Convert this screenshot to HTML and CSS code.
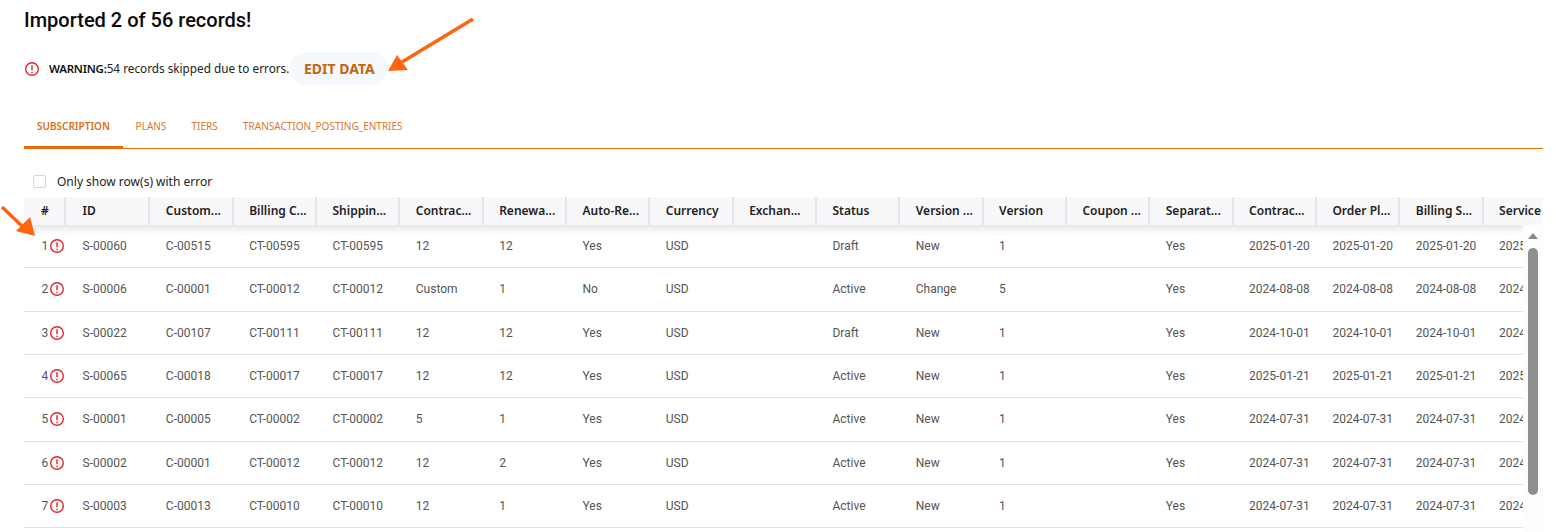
FILE: index.html
```html
<!DOCTYPE html>
<html lang="en">
<head>
<meta charset="utf-8">
<title>Import result</title>
<link rel="stylesheet" href="styles.css">
</head>
<body>
<main class="page">
  <h1 class="title">Imported 2 of 56 records!</h1>
  <div class="warning">
    <svg class="err err-warn" viewBox="1 1 14 14"><circle cx="8" cy="8" r="6.3"/><path d="M8 4.2v5M8 10.7v1.5"/></svg>
    <span class="warn-text"><b>WARNING:</b>54 records skipped due to errors.</span>
    <button class="edit">EDIT DATA</button>
  </div>
  <nav class="tabs">
    <a class="tab active">SUBSCRIPTION</a>
    <a class="tab">PLANS</a>
    <a class="tab">TIERS</a>
    <a class="tab">TRANSACTION_POSTING_ENTRIES</a>
  </nav>
  <label class="filter"><span class="box"></span>Only show row(s) with error</label>
  <div class="grid-wrap">
    <table class="grid">
      <colgroup><col class="c-num"><col span="18" class="c-std"></colgroup>
      <thead>
        <tr>
          <th class="num">#</th><th>ID</th><th>Custom...</th><th>Billing C...</th><th>Shippin...</th><th>Contrac...</th><th>Renewa...</th><th>Auto-Re...</th><th>Currency</th><th>Exchan...</th><th>Status</th><th>Version ...</th><th>Version</th><th>Coupon ...</th><th>Separat...</th><th>Contrac...</th><th>Order Pl...</th><th>Billing S...</th><th>Service ...</th>
        </tr>
      </thead>
      <tbody>
        <tr><td class="num">1<svg class="err" viewBox="1 1 14 14"><circle cx="8" cy="8" r="6.3"/><path d="M8 4.2v5M8 10.7v1.5"/></svg></td><td>S-00060</td><td>C-00515</td><td>CT-00595</td><td>CT-00595</td><td>12</td><td>12</td><td>Yes</td><td>USD</td><td></td><td>Draft</td><td>New</td><td>1</td><td></td><td>Yes</td><td>2025-01-20</td><td>2025-01-20</td><td>2025-01-20</td><td>2025-01-20</td></tr>
        <tr><td class="num">2<svg class="err" viewBox="1 1 14 14"><circle cx="8" cy="8" r="6.3"/><path d="M8 4.2v5M8 10.7v1.5"/></svg></td><td>S-00006</td><td>C-00001</td><td>CT-00012</td><td>CT-00012</td><td>Custom</td><td>1</td><td>No</td><td>USD</td><td></td><td>Active</td><td>Change</td><td>5</td><td></td><td>Yes</td><td>2024-08-08</td><td>2024-08-08</td><td>2024-08-08</td><td>2024-08-08</td></tr>
        <tr><td class="num">3<svg class="err" viewBox="1 1 14 14"><circle cx="8" cy="8" r="6.3"/><path d="M8 4.2v5M8 10.7v1.5"/></svg></td><td>S-00022</td><td>C-00107</td><td>CT-00111</td><td>CT-00111</td><td>12</td><td>12</td><td>Yes</td><td>USD</td><td></td><td>Draft</td><td>New</td><td>1</td><td></td><td>Yes</td><td>2024-10-01</td><td>2024-10-01</td><td>2024-10-01</td><td>2024-10-01</td></tr>
        <tr><td class="num">4<svg class="err" viewBox="1 1 14 14"><circle cx="8" cy="8" r="6.3"/><path d="M8 4.2v5M8 10.7v1.5"/></svg></td><td>S-00065</td><td>C-00018</td><td>CT-00017</td><td>CT-00017</td><td>12</td><td>12</td><td>Yes</td><td>USD</td><td></td><td>Active</td><td>New</td><td>1</td><td></td><td>Yes</td><td>2025-01-21</td><td>2025-01-21</td><td>2025-01-21</td><td>2025-01-21</td></tr>
        <tr><td class="num">5<svg class="err" viewBox="1 1 14 14"><circle cx="8" cy="8" r="6.3"/><path d="M8 4.2v5M8 10.7v1.5"/></svg></td><td>S-00001</td><td>C-00005</td><td>CT-00002</td><td>CT-00002</td><td>5</td><td>1</td><td>Yes</td><td>USD</td><td></td><td>Active</td><td>New</td><td>1</td><td></td><td>Yes</td><td>2024-07-31</td><td>2024-07-31</td><td>2024-07-31</td><td>2024-07-31</td></tr>
        <tr><td class="num">6<svg class="err" viewBox="1 1 14 14"><circle cx="8" cy="8" r="6.3"/><path d="M8 4.2v5M8 10.7v1.5"/></svg></td><td>S-00002</td><td>C-00001</td><td>CT-00012</td><td>CT-00012</td><td>12</td><td>2</td><td>Yes</td><td>USD</td><td></td><td>Active</td><td>New</td><td>1</td><td></td><td>Yes</td><td>2024-07-31</td><td>2024-07-31</td><td>2024-07-31</td><td>2024-07-31</td></tr>
        <tr><td class="num">7<svg class="err" viewBox="1 1 14 14"><circle cx="8" cy="8" r="6.3"/><path d="M8 4.2v5M8 10.7v1.5"/></svg></td><td>S-00003</td><td>C-00013</td><td>CT-00010</td><td>CT-00010</td><td>12</td><td>1</td><td>Yes</td><td>USD</td><td></td><td>Active</td><td>New</td><td>1</td><td></td><td>Yes</td><td>2024-07-31</td><td>2024-07-31</td><td>2024-07-31</td><td>2024-07-31</td></tr>
      </tbody>
    </table>
    <div class="scrollbar"><span class="sb-arrow"></span><span class="sb-thumb"></span></div>
  </div>
</main>
<svg class="arrow arrow-top" viewBox="0 0 100 70"><path d="M93 9 L22 52" class="arrow-line"/><path d="M8 61 L28 60 L17 45 Z" class="arrow-head"/></svg>
<svg class="arrow arrow-side" viewBox="0 0 40 40"><path d="M2 7 L23 27" class="arrow-line"/><path d="M35 36 L16 31 L30 17 Z" class="arrow-head"/></svg>
</body>
</html>
```
FILE: styles.css
```css
* { box-sizing: border-box; }
html, body { margin: 0; height: 532px; overflow: hidden; background: #fff; }
body { position: relative; font-family: "Noto Sans", sans-serif; color: #1f1f1f; }
.page { padding: 8px 11px 0 24px; }
.title { margin: 0; font: 500 20px/24px Roboto, sans-serif; color: #0b0b0b; }
.warning { display: flex; align-items: center; margin-top: 19px; height: 34px; font-size: 11.75px; }
.err { width: 14px; height: 14px; fill: none; stroke: #e3262a; stroke-width: 1.4; flex: none; }
.err-warn { margin: 2px 10px 0 1px; }
.warn-text b { font-size: 11.5px; font-weight: 600; letter-spacing: -.25px; color: #111; }
.warn-text { color: #222; }
.edit { height: 33px; width: 98px; margin-left: 1px; border: 0; border-radius: 17px; background: #f5f8fc; color: #c4650f; font: 700 14px/33px "Noto Sans", sans-serif; padding: 0; }
.tabs { display: flex; margin-top: 22px; height: 42px; border-bottom: 1px solid #ec6c06; }
.tab { padding: 0 12.6px; font: 400 10px/39px "Noto Sans", sans-serif; color: #d9782d; white-space: nowrap; }
.tab.active { width: 99px; flex: none; padding: 0 13px; font-weight: 600; color: #e06d12; border-bottom: 3px solid #e56b0a; height: 42px; }
.filter { display: flex; align-items: center; height: 20px; margin-top: 22px; font-size: 12px; color: #222; }
.box { width: 13px; height: 13px; margin: 0 11px 0 9px; border: 1px solid #d5d5d8; border-radius: 2px; background: #fff; }
.grid-wrap { position: relative; margin-top: 6px; height: 340px; overflow: hidden; }
.grid { table-layout: fixed; width: 1542.94px; border-collapse: separate; border-spacing: 0; font-family: Roboto, sans-serif; font-size: 12px; }
.c-num { width: 43px; }
.c-std { width: 83.33px; }
th { height: 28px; padding: 0 0 1px 15.5px; background: #f8f8fb; border-right: 2px solid #e5e5ec; font: 600 12px/27px "Noto Sans", sans-serif; text-align: left; color: #222; overflow: hidden; white-space: nowrap; }
thead tr { box-shadow: 0 4px 8px rgba(0,0,0,.11); }
th.num { padding-left: 17px; border-right: 0; box-shadow: inset -1px 0 0 #f8f8fb, inset -3px 0 0 #e5e5ec; }
td { height: 43.33px; padding: 0 0 0 15.5px; border-bottom: 1px solid #e2e2e4; color: #555; white-space: nowrap; overflow: hidden; }
td.num { padding: 0 0 0 17.5px; }
td.num .err { vertical-align: -3px; margin-left: 1.5px; }
.scrollbar { position: absolute; right: 0; top: 28px; bottom: 0; width: 20px; background: #fdfdfd; }
.sb-arrow { position: absolute; left: 5px; top: 8px; border: 5px solid transparent; border-top: 0; border-bottom: 6px solid #8a8a8a; }
.sb-thumb { position: absolute; left: 5px; top: 23px; width: 10px; height: 247px; background: #8f8f8f; border-radius: 6px; }
.arrow { position: absolute; overflow: visible; }
.arrow-top { left: 380px; top: 10px; width: 100px; height: 70px; }
.arrow-side { left: 0; top: 200px; width: 40px; height: 40px; }
.arrow-line { fill: none; stroke: #ff6410; stroke-width: 3.5; }
.arrow-head { fill: #ff6410; }
```
